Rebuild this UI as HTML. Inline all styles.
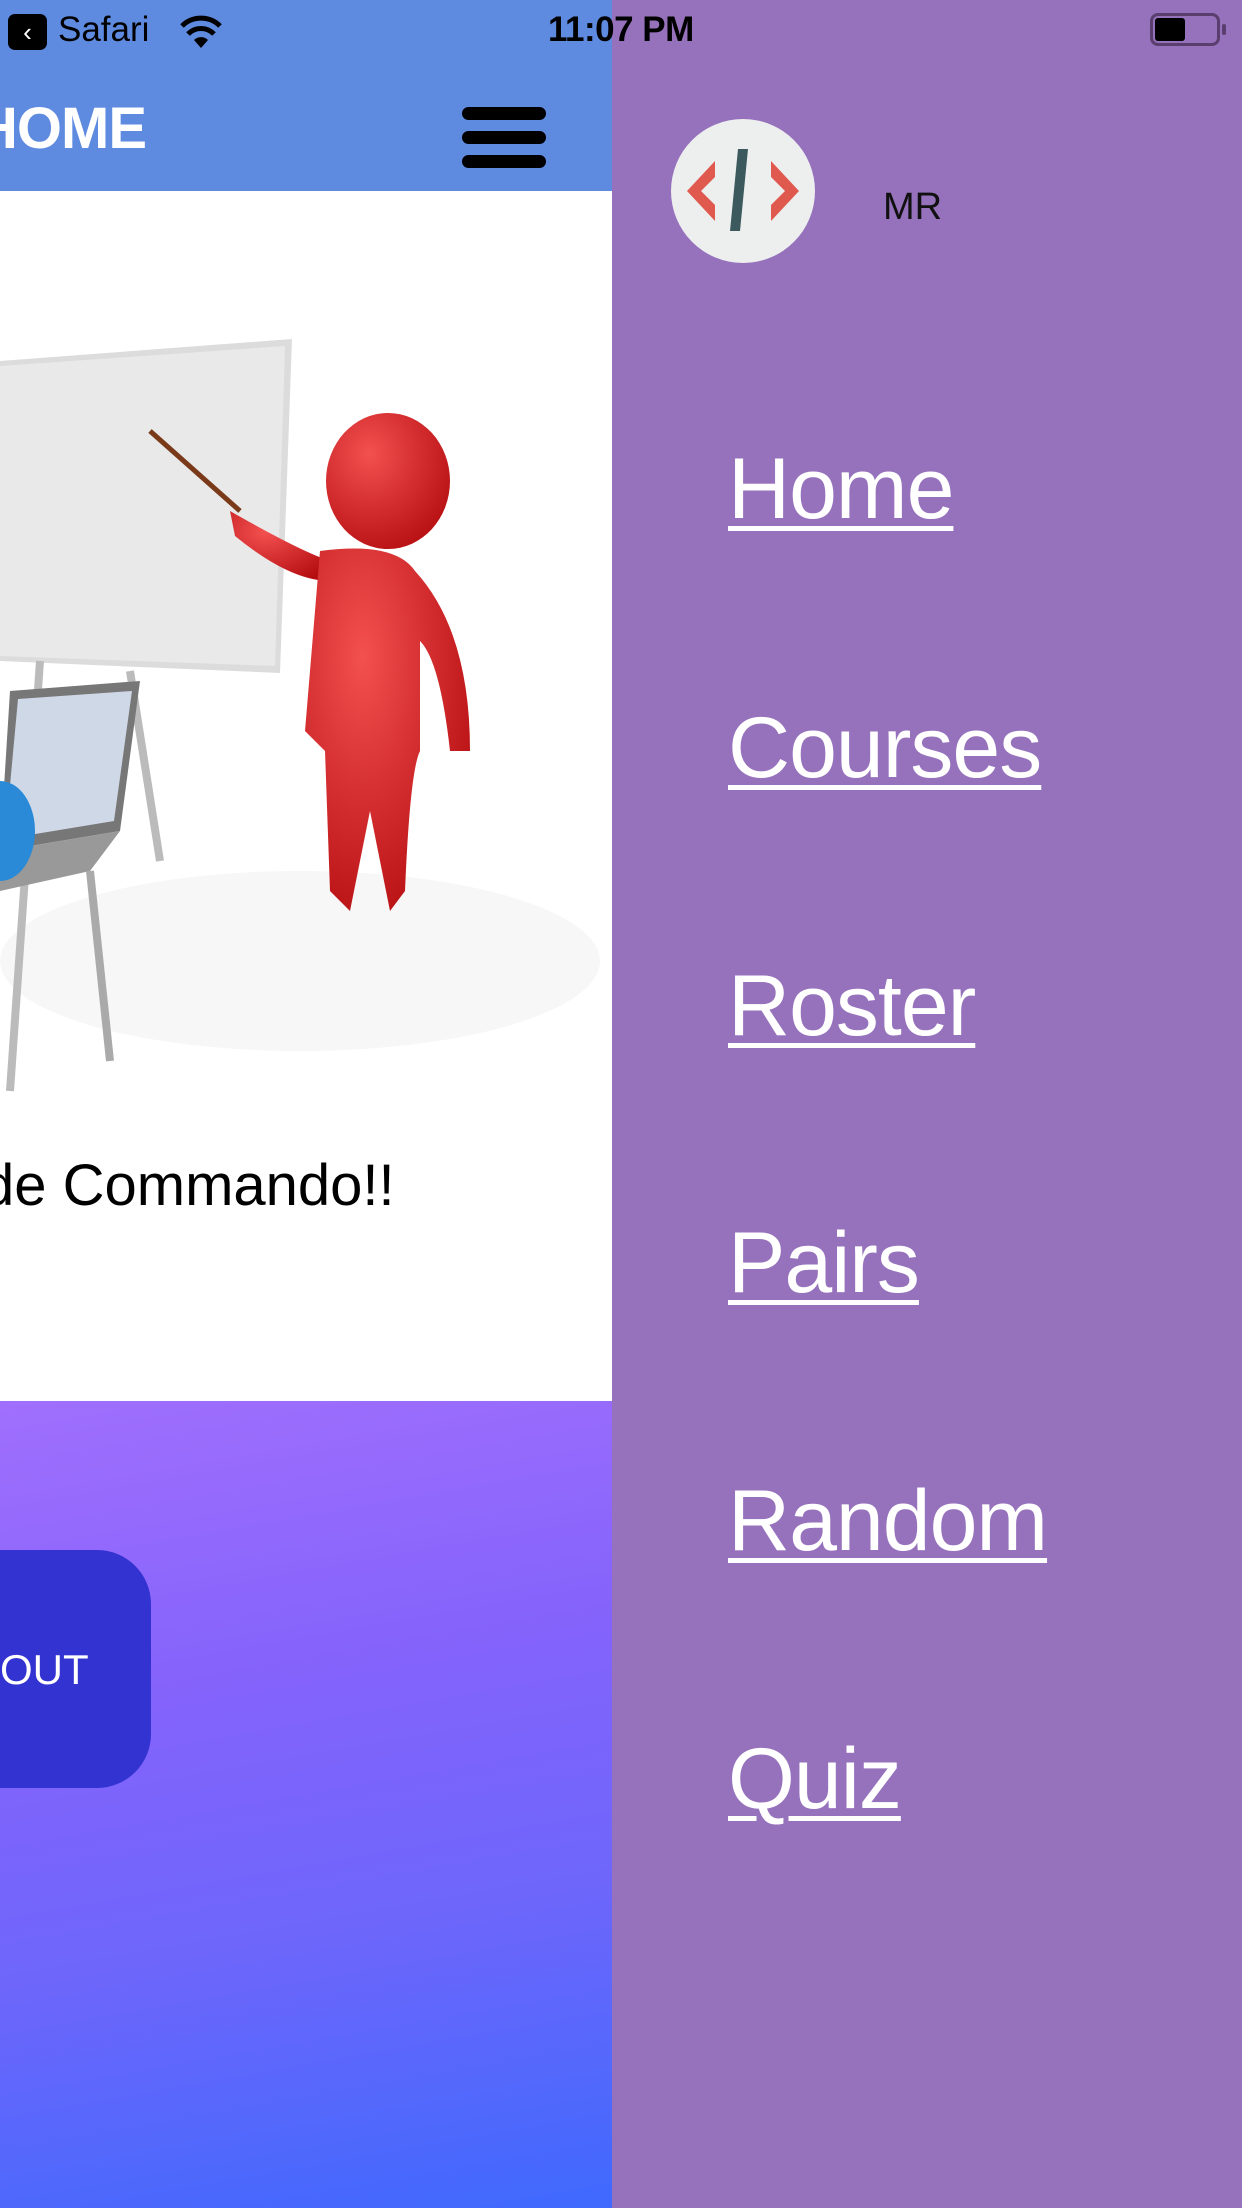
<!DOCTYPE html>
<html><head><meta charset="utf-8"><style>
*{margin:0;padding:0;box-sizing:border-box}
body{width:1242px;height:2208px;overflow:hidden;position:relative;font-family:"Liberation Sans",sans-serif;background:#fff}
.abs{position:absolute}
#hdr{left:0;top:0;width:612px;height:191px;background:#5e8ae0}
#bg{left:0;top:1401px;width:612px;height:807px;background:linear-gradient(170deg,#a06ffd 0%,#8463fb 35%,#6d66fb 65%,#3f69fd 100%)}
#drawer{left:612px;top:0;width:630px;height:2208px;background:#9672bd}
.menu{position:absolute;left:728px;color:#fff;font-size:86px;letter-spacing:-1px;text-decoration:underline;text-decoration-thickness:5px;text-underline-offset:8px;line-height:1}
</style></head><body>
<div id="hdr" class="abs"></div>
<div class="abs" style="left:-24px;top:95px;color:#fff;font-weight:bold;font-size:58px;letter-spacing:-1px">HOME</div>
<div class="abs" style="left:462px;top:107px;width:84px;height:13px;background:#000;border-radius:7px"></div>
<div class="abs" style="left:462px;top:131px;width:84px;height:13px;background:#000;border-radius:7px"></div>
<div class="abs" style="left:462px;top:155px;width:84px;height:13px;background:#000;border-radius:7px"></div>

<svg class="abs" style="left:0;top:191px" width="612" height="1210">
<defs><radialGradient id="r" cx="0.35" cy="0.3" r="0.8"><stop offset="0" stop-color="#f35050"/><stop offset="1" stop-color="#b50d10"/></radialGradient></defs>
<ellipse cx="300" cy="770" rx="300" ry="90" fill="#f7f7f7"/>
<polygon points="0,170 292,148 280,482 0,470" fill="#dcdcdc"/>
<polygon points="0,175 285,155 275,475 0,465" fill="#e9e9e9"/>
<line x1="40" y1="470" x2="10" y2="900" stroke="#bbb" stroke-width="8"/>
<line x1="130" y1="480" x2="160" y2="670" stroke="#bbb" stroke-width="8"/>
<polygon points="10,500 140,490 120,640 0,660" fill="#777"/>
<polygon points="18,508 132,500 114,630 5,648" fill="#cfd8e6"/>
<polygon points="0,660 120,640 90,680 0,700" fill="#999"/>
<line x1="90" y1="680" x2="110" y2="870" stroke="#aaa" stroke-width="8"/>
<ellipse cx="0" cy="640" rx="35" ry="50" fill="#2a8ad8"/>
<line x1="150" y1="240" x2="240" y2="320" stroke="#7a3a1a" stroke-width="5"/>
<ellipse cx="388" cy="290" rx="62" ry="68" fill="url(#r)"/>
<path d="M230 320 Q300 360 330 370 L330 390 Q290 390 235 345 Z" fill="url(#r)"/>
<path d="M320 360 Q395 350 415 380 Q470 440 470 560 L450 560 Q440 470 420 450 L420 560 Q410 580 405 700 L390 720 L370 620 L350 720 L330 700 L325 560 L305 540 Z" fill="url(#r)"/>
</svg>
<div class="abs" style="left:-18px;top:1152px;font-size:58px;color:#000">de Commando!!</div>

<div id="bg" class="abs"></div>
<div class="abs" style="left:-40px;top:1550px;width:191px;height:238px;background:#3333d2;border-radius:0 54px 54px 0"></div>
<div class="abs" style="left:0;top:1646px;color:#fff;font-size:42px">OUT</div>

<div id="drawer" class="abs"></div>
<svg class="abs" style="left:671px;top:119px" width="144" height="144" viewBox="0 0 144 144">
<circle cx="72" cy="72" r="72" fill="#edeeee"/>
<polygon points="44,42 16,72 44,102 44,86 30,72 44,58" fill="#e0594f"/>
<polygon points="100,42 128,72 100,102 100,86 114,72 100,58" fill="#e0594f"/>
<polygon points="67,30 77,30 69,112 59,112" fill="#3c5a5e"/>
</svg>
<div class="abs" style="left:883px;top:186px;font-size:38px;color:#111">MR</div>
<div class="menu" style="top:446px">Home</div>
<div class="menu" style="top:705px">Courses</div>
<div class="menu" style="top:963px">Roster</div>
<div class="menu" style="top:1220px">Pairs</div>
<div class="menu" style="top:1478px">Random</div>
<div class="menu" style="top:1736px">Quiz</div>

<div class="abs" style="left:8px;top:14px;width:39px;height:36px;background:#000;border-radius:7px;color:#fff;font-size:26px;text-align:center;line-height:36px">‹</div>
<div class="abs" style="left:58px;top:10px;font-size:35px;color:#000">Safari</div>
<svg class="abs" style="left:178px;top:14px" width="46" height="36" viewBox="0 0 46 36"><path d="M23 34 L16 26 A10 10 0 0 1 30 26Z" fill="#000"/><path d="M10 20 A18 18 0 0 1 36 20" stroke="#000" stroke-width="5" fill="none"/><path d="M4 12 A27 27 0 0 1 42 12" stroke="#000" stroke-width="5" fill="none"/></svg>
<div class="abs" style="left:548px;top:10px;font-size:35px;color:#000;font-weight:bold;letter-spacing:-0.5px">11:07 PM</div>
<div class="abs" style="left:1150px;top:13px;width:70px;height:33px;border:3px solid #5a3f6e;border-radius:8px"></div>
<div class="abs" style="left:1155px;top:18px;width:30px;height:23px;background:#000;border-radius:3px"></div>
<div class="abs" style="left:1222px;top:24px;width:4px;height:11px;background:#5a3f6e;border-radius:2px"></div>
</body></html>
